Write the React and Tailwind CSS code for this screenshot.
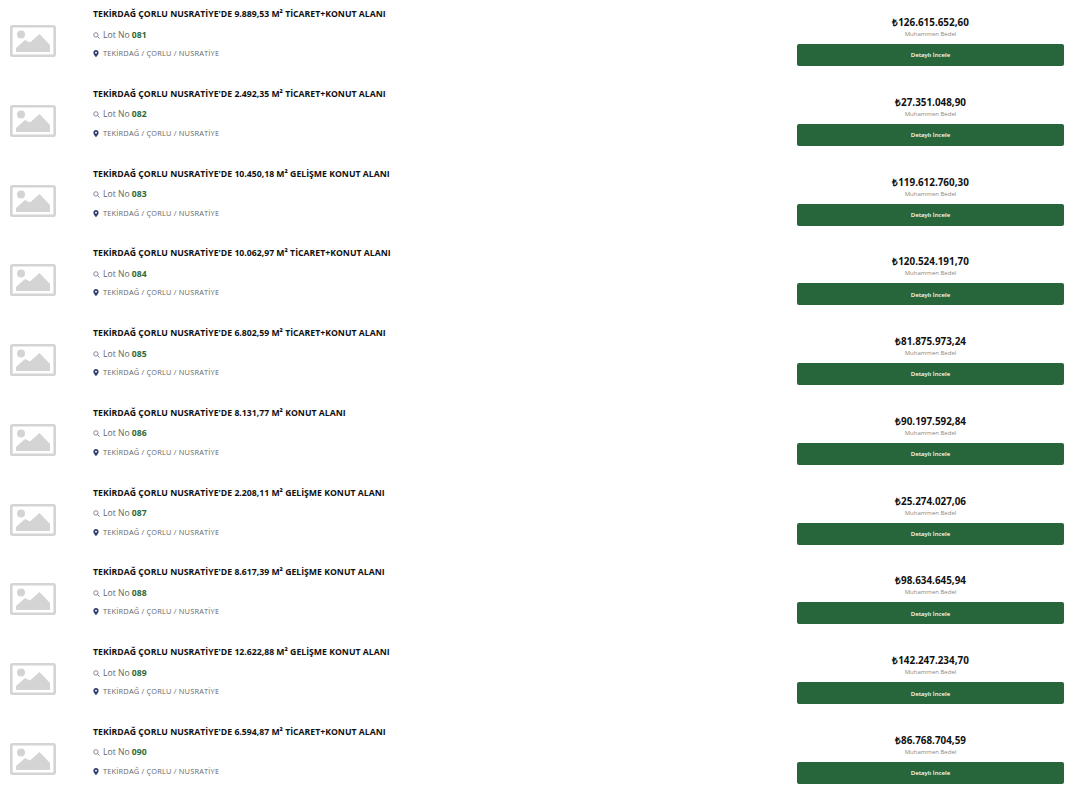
const rows = [
  ["9.889,53", "TİCARET+KONUT ALANI", "081", "126.615.652,60"],
  ["2.492,35", "TİCARET+KONUT ALANI", "082", "27.351.048,90"],
  ["10.450,18", "GELİŞME KONUT ALANI", "083", "119.612.760,30"],
  ["10.062,97", "TİCARET+KONUT ALANI", "084", "120.524.191,70"],
  ["6.802,59", "TİCARET+KONUT ALANI", "085", "81.875.973,24"],
  ["8.131,77", "KONUT ALANI", "086", "90.197.592,84"],
  ["2.208,11", "GELİŞME KONUT ALANI", "087", "25.274.027,06"],
  ["8.617,39", "GELİŞME KONUT ALANI", "088", "98.634.645,94"],
  ["12.622,88", "GELİŞME KONUT ALANI", "089", "142.247.234,70"],
  ["6.594,87", "TİCARET+KONUT ALANI", "090", "86.768.704,59"],
];

function Placeholder() {
  return (
    <svg width="46" height="32" viewBox="0 0 46 32" className="block">
      <rect x="1.3" y="1.3" width="43.4" height="29.4" rx="1.5" fill="none" stroke="#d4d4d4" strokeWidth="2.6" />
      <circle cx="11" cy="9.5" r="4" fill="#d4d4d4" />
      <path d="M6 27 L6 23 L15 15 L20 17.5 L29.5 9 L40 20 L40 27 Z" fill="#d4d4d4" />
    </svg>
  );
}

function Search() {
  return (
    <svg width="7" height="7" viewBox="0 0 7 7" className="block">
      <circle cx="2.9" cy="2.9" r="2.2" fill="none" stroke="#7a7a96" strokeWidth="0.9" />
      <path d="M4.6 4.6 L6.6 6.6" stroke="#7a7a96" strokeWidth="1" />
    </svg>
  );
}

function Pin() {
  return (
    <svg width="6" height="7" viewBox="0 0 6 8" className="block">
      <path fillRule="evenodd" d="M3 0C1.3 0 0 1.3 0 3c0 2 3 5 3 5s3-3 3-5C6 1.3 4.7 0 3 0Zm0 1.9a1.1 1.1 0 1 1 0 2.2 1.1 1.1 0 0 1 0-2.2Z" fill="#2f3f6b" />
    </svg>
  );
}

function Row({ area, kind, lot, price }) {
  return (
    <div className="flex h-[79.78px] items-start">
      <div className="w-[93px] shrink-0 pl-[10px] pt-[25px]">
        <Placeholder />
      </div>
      <div className="flex-1 min-w-0 pt-[8px]">
        <div className="text-[8.7px] leading-[13px] font-bold text-[#111]">
          TEKİRDAĞ ÇORLU NUSRATİYE'DE {area} M² {kind}
        </div>
        <div className="mt-[7.5px] flex items-center gap-[3px] text-[8.6px] leading-[13px] text-[#666]">
          <Search />
          <span>Lot No <span className="font-bold text-[#2b6a38]">{lot}</span></span>
        </div>
        <div className="mt-[5.5px] flex items-center gap-[4px] leading-[13px] text-[#666]">
          <Pin />
          <span className="text-[7.4px] tracking-[0.2px]">TEKİRDAĞ / ÇORLU / NUSRATİYE</span>
        </div>
      </div>
      <div className="w-[267px] shrink-0 mr-[4px] pt-[15px] flex flex-col items-center">
        <div className="text-[9.9px] leading-[14px] font-bold text-[#111]">₺{price}</div>
        <div className="mt-[1px] text-[6px] leading-[8px] text-[#888]">Muhammen Bedel</div>
        <button className="mt-[6px] w-full h-[22px] rounded-[2px] bg-[#26663a] text-[6.1px] font-semibold text-white">
          Detaylı İncele
        </button>
      </div>
    </div>
  );
}

export default function App() {
  return (
    <div className="min-h-[794px] bg-white font-['Open_Sans',sans-serif]">
      {rows.map((r) => (
        <Row key={r[2]} area={r[0]} kind={r[1]} lot={r[2]} price={r[3]} />
      ))}
    </div>
  );
}
